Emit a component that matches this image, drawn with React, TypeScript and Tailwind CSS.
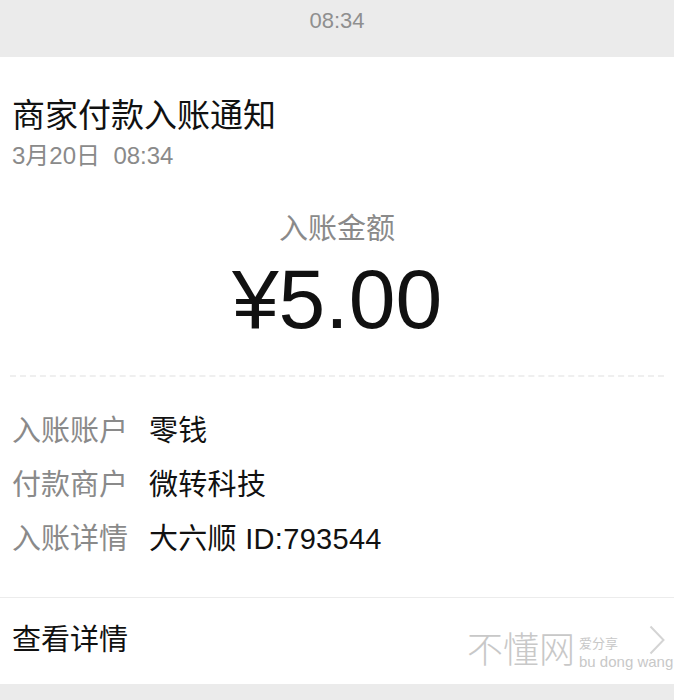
export default function App() {
  const rows = [
    { label: "入账账户", value: "零钱" },
    { label: "付款商户", value: "微转科技" },
    { label: "入账详情", value: "大六顺 ID:793544" },
  ]

  return (
    <div
      className="w-[674px] h-[700px] bg-[#ebebeb] overflow-hidden relative"
      style={{ fontFamily: '"Liberation Sans", "Noto Sans CJK SC", sans-serif' }}
    >
      {/* Time header */}
      <div className="h-[57px] flex justify-center pt-[8px] text-[22px] leading-[26px] text-[#8f8f8f]">
        08:34
      </div>

      {/* Card */}
      <div className="bg-white h-[627px] flex flex-col">
        <div className="px-3 pt-[38px]">
          <h1 className="text-[33px] leading-[41px] text-[#111]">商家付款入账通知</h1>
          <p className="text-[24px] leading-[30px] text-[#8a8a8a] mt-[5px]">3月20日&nbsp;&nbsp;08:34</p>
        </div>

        <div className="flex flex-col items-center mt-[40px]">
          <p className="text-[29px] leading-[36px] text-[#8a8a8a]">入账金额</p>
          <p className="text-[84px] leading-[96px] font-light text-[#111] mt-[4px]">¥5.00</p>
        </div>

        <div className="mx-[10px] mt-[28px] border-t-2 border-dashed border-[#efefef]" />

        <div className="px-3 pt-[36px] flex flex-col gap-[18px]">
          {rows.map((row) => (
            <div key={row.label} className="flex items-center text-[29px] leading-[36px]">
              <span className="w-[137px] text-[#8a8a8a]">{row.label}</span>
              <span className="text-[#111] tracking-[0.3px]">{row.value}</span>
            </div>
          ))}
        </div>

        <div className="mt-[40px] border-t border-[#ececec]" />

        <div className="flex items-center justify-between pl-3 pr-[9px] h-[86px]">
          <span className="text-[29px] text-[#111]">查看详情</span>
          <svg width="16" height="30" viewBox="0 0 16 30" fill="none" className="-mt-[2px]">
            <polyline points="1.5,1.5 14.5,15 1.5,28.5" stroke="#d4d4d4" strokeWidth="2" />
          </svg>
        </div>
      </div>

      {/* Watermark */}
      <div className="absolute left-[467px] top-[627px] flex items-end gap-[4px] text-[#c8c8c8]">
        <span className="text-[36px] leading-[48px] font-light">不懂网</span>
        <div className="flex flex-col leading-[18px] pb-[4px]">
          <span className="text-[13px]">爱分享</span>
          <span className="text-[15px]">bu dong wang</span>
        </div>
      </div>
    </div>
  )
}
